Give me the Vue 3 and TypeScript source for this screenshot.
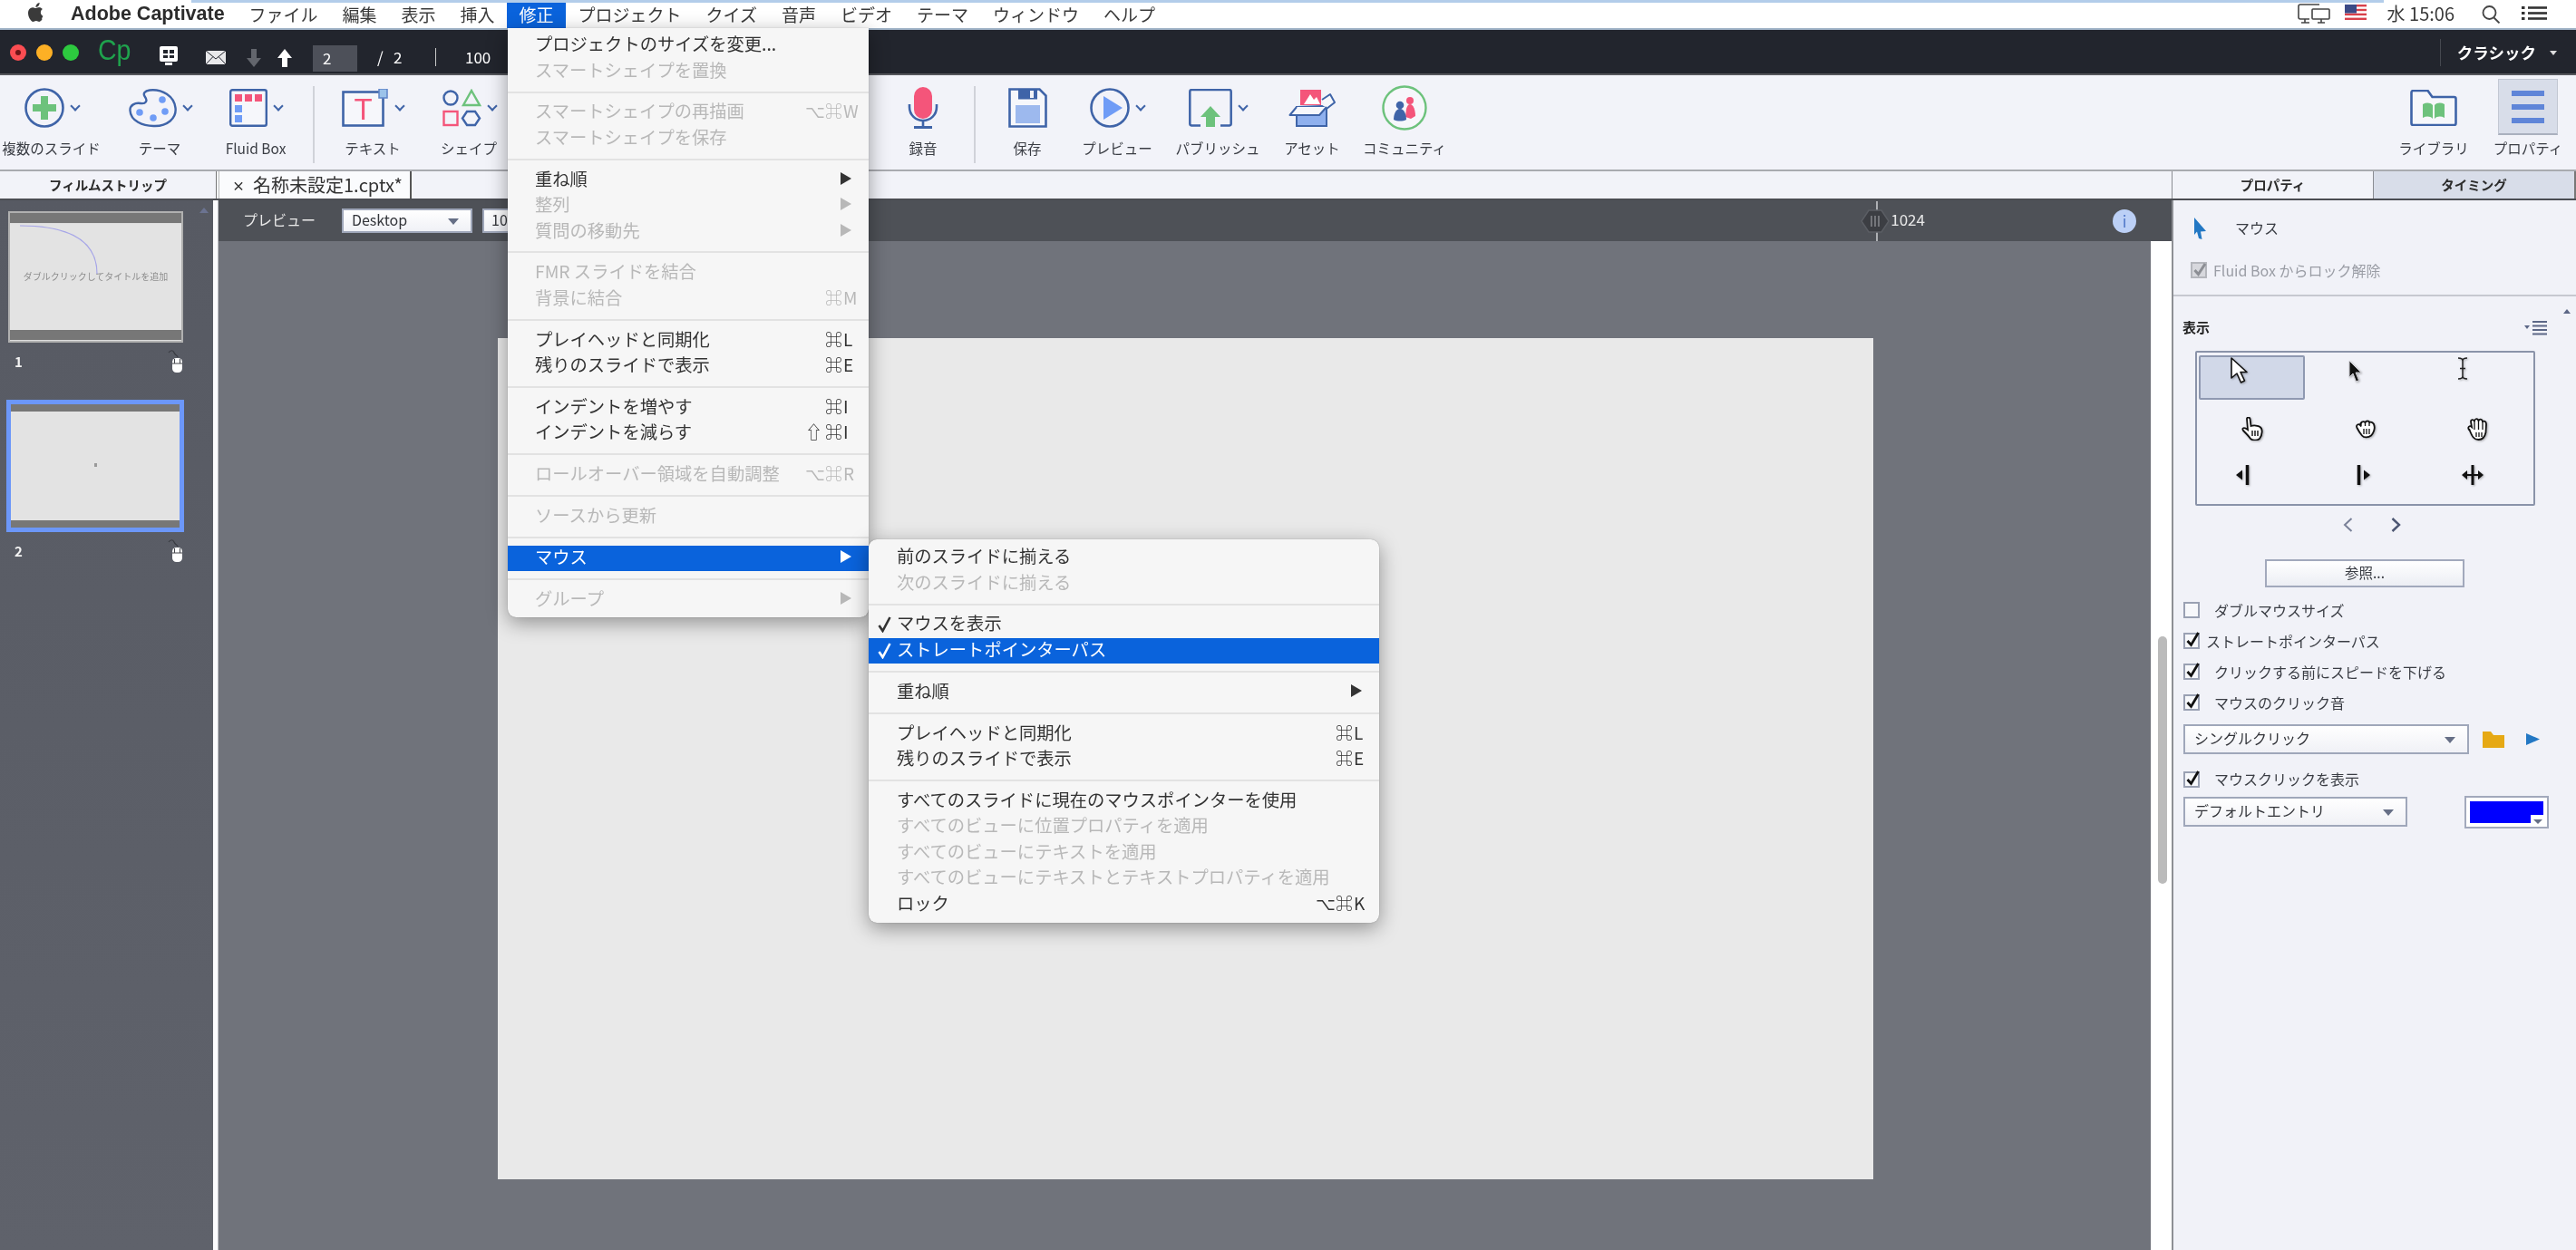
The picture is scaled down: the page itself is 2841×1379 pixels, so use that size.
<script setup lang="ts">
interface MenuItem {
  sep?: boolean
  l?: string
  d?: boolean
  k?: string[]
  arrow?: boolean
  active?: boolean
  check?: boolean
}

const menuNames = ['ファイル', '編集', '表示', '挿入', '修正', 'プロジェクト', 'クイズ', '音声', 'ビデオ', 'テーマ', 'ウィンドウ', 'ヘルプ']

const mainMenu: MenuItem[] = [
  { l: 'プロジェクトのサイズを変更...' },
  { l: 'スマートシェイプを置換', d: true },
  { sep: true },
  { l: 'スマートシェイプの再描画', d: true, k: ['⌥', '⌘', 'W'] },
  { l: 'スマートシェイプを保存', d: true },
  { sep: true },
  { l: '重ね順', arrow: true },
  { l: '整列', d: true, arrow: true },
  { l: '質問の移動先', d: true, arrow: true },
  { sep: true },
  { l: 'FMR スライドを結合', d: true },
  { l: '背景に結合', d: true, k: ['', '⌘', 'M'] },
  { sep: true },
  { l: 'プレイヘッドと同期化', k: ['', '⌘', 'L'] },
  { l: '残りのスライドで表示', k: ['', '⌘', 'E'] },
  { sep: true },
  { l: 'インデントを増やす', k: ['', '⌘', 'I'] },
  { l: 'インデントを減らす', k: ['⇧', '⌘', 'I'] },
  { sep: true },
  { l: 'ロールオーバー領域を自動調整', d: true, k: ['⌥', '⌘', 'R'] },
  { sep: true },
  { l: 'ソースから更新', d: true },
  { sep: true },
  { l: 'マウス', active: true, arrow: true },
  { sep: true },
  { l: 'グループ', d: true, arrow: true },
]

const subMenu: MenuItem[] = [
  { l: '前のスライドに揃える' },
  { l: '次のスライドに揃える', d: true },
  { sep: true },
  { l: 'マウスを表示', check: true },
  { l: 'ストレートポインターパス', check: true, active: true },
  { sep: true },
  { l: '重ね順', arrow: true },
  { sep: true },
  { l: 'プレイヘッドと同期化', k: ['', '⌘', 'L'] },
  { l: '残りのスライドで表示', k: ['', '⌘', 'E'] },
  { sep: true },
  { l: 'すべてのスライドに現在のマウスポインターを使用' },
  { l: 'すべてのビューに位置プロパティを適用', d: true },
  { l: 'すべてのビューにテキストを適用', d: true },
  { l: 'すべてのビューにテキストとテキストプロパティを適用', d: true },
  { l: 'ロック', k: ['⌥', '⌘', 'K'] },
]

const menus = [
  { cls: 'menu-main', items: mainMenu },
  { cls: 'menu-sub', items: subMenu },
]

const checks = [
  { label: 'ダブルマウスサイズ', on: false, tight: false },
  { label: 'ストレートポインターパス', on: true, tight: true },
  { label: 'クリックする前にスピードを下げる', on: true, tight: false },
  { label: 'マウスのクリック音', on: true, tight: false },
]
</script>

<template>
  <div class="app">
    <!-- macOS menu bar -->
    <header class="menubar">
      <svg class="apple" viewBox="0 0 24 24"><path fill="#3a3a3a" d="M18.71 19.5c-.83 1.24-1.71 2.45-3.05 2.47-1.34.03-1.77-.79-3.29-.79-1.53 0-2 .77-3.27.82-1.31.05-2.3-1.32-3.14-2.53C4.25 17 2.94 12.45 4.7 9.39c.87-1.52 2.43-2.48 4.12-2.51 1.28-.02 2.5.87 3.29.87.78 0 2.26-1.07 3.68-.91.6.03 2.27.24 3.34 1.81-.09.06-2 1.17-1.98 3.5.03 2.78 2.44 3.71 2.47 3.71-.02.07-.38 1.32-1.27 2.64M13 3.5c.73-.83 1.94-1.46 2.94-1.5.13 1.17-.34 2.35-1.04 3.19-.69.85-1.83 1.51-2.95 1.42-.15-1.15.41-2.35 1.05-3.11z"/></svg>
      <span class="appname">Adobe Captivate</span>
      <span v-for="m in menuNames" :key="m" class="mitem" :class="{ on: m === '修正' }">{{ m }}</span>
      <div class="status">
        <svg class="st-screens" viewBox="0 0 36 22" fill="none" stroke="#444" stroke-width="1.600">
          <path d="M24 1H3a2 2 0 0 0-2 2v12a2 2 0 0 0 2 2h10"/><path d="M8 17v4M4 21h9"/>
          <rect x="16" y="6" width="19" height="11" rx="1" fill="#fff"/><path d="M26 17v4M22 21h8"/>
        </svg>
        <svg class="st-flag" viewBox="0 0 24 17">
          <rect width="24" height="17" fill="#fff"/>
          <rect y="0" width="24" height="2.400" fill="#d8404a"/><rect y="4.800" width="24" height="2.400" fill="#d8404a"/><rect y="9.700" width="24" height="2.400" fill="#d8404a"/><rect y="14.600" width="24" height="2.400" fill="#d8404a"/>
          <rect width="13" height="9.500" fill="#3b4a86"/>
        </svg>
        <span class="st-clock">水 15:06</span>
        <svg class="st-search" viewBox="0 0 21 20" fill="none" stroke="#444" stroke-width="1.800"><circle cx="8.500" cy="8" r="7"/><path d="M13.500 13.500l6 6"/></svg>
        <svg class="st-list" viewBox="0 0 28 15" fill="#333"><rect width="3.500" height="3" y="0"/><rect width="3.500" height="3" y="6"/><rect width="3.500" height="3" y="12"/><rect x="7" y=".2" width="21" height="2.600"/><rect x="7" y="6.200" width="21" height="2.600"/><rect x="7" y="12.200" width="21" height="2.600"/></svg>
      </div>
    </header>

    <!-- Application title bar -->
    <div class="titlebar">
      <i class="light red"></i><i class="light yellow"></i><i class="light green"></i>
      <span class="cp">Cp</span>
      <svg class="tb-slide" viewBox="0 0 22 24"><rect x="1" y="1" width="20" height="17" rx="2" fill="#fff"/><rect x="5" y="5" width="5" height="4" fill="#22252d"/><rect x="12" y="5" width="5" height="4" fill="#22252d"/><rect x="5" y="11" width="5" height="3" fill="#22252d"/><rect x="12" y="11" width="5" height="3" fill="#22252d"/><rect x="7" y="19" width="8" height="3" fill="#fff"/></svg>
      <svg class="tb-mail" viewBox="0 0 24 17" fill="#e8e8ea" stroke="#22252d" stroke-width="1"><rect x=".5" y=".5" width="23" height="16"/><path d="M.5.5L12 10 23.5.5M.5 16.5L9 7.500M23.500 16.500L15 7.500" fill="none"/></svg>
      <svg class="tb-arrow tb-down" viewBox="0 0 16 20"><path fill="#63666d" d="M5 0h6v10h5l-8 10-8-10h5z"/></svg>
      <svg class="tb-arrow tb-up" viewBox="0 0 16 20"><path fill="#fff" d="M8 0l8 10h-5v10H5V10H0z"/></svg>
      <span class="tb-input">2</span>
      <span class="tb-total">/&nbsp;&nbsp;&nbsp;2</span>
      <i class="tb-sep"></i>
      <span class="tb-zoom">100</span>
      <div class="workspace">
        <i class="ws-sep"></i>
        <span class="ws-name">クラシック</span>
        <i class="ws-caret"></i>
      </div>
    </div>

    <!-- Ribbon -->
    <div class="toolbar">
      <div class="tool w-slides">
        <div class="ticon">
          <svg width="44" height="44" viewBox="0 0 44 44"><circle cx="22" cy="22" r="20.500" fill="#f2f3f9" stroke="#3f64a8" stroke-width="2.600"/><path fill="#6dc27c" d="M18 9h8v9h9v8h-9v9h-8v-9H9v-8h9z"/></svg>
          <i class="chev"></i>
        </div>
        <span class="tlabel">複数のスライド</span>
      </div>
      <div class="tool w-theme">
        <div class="ticon">
          <svg width="53" height="44" viewBox="0 0 53 44"><path fill="none" stroke="#3f64a8" stroke-width="2.400" d="M23 2.500C37 1 50 9 51.500 22 53 34 42 42 29 42 15 42.500 2 36 1.500 25 1 19 7 16 13 17c6 1 8-3 5-7-3-4 0-7 5-7.500z"/><circle cx="12" cy="27" r="3.800" fill="#6f9cf6"/><circle cx="27" cy="33" r="3.800" fill="#6f9cf6"/><circle cx="40" cy="26" r="3.800" fill="#6f9cf6"/><circle cx="37" cy="13" r="3.800" fill="#6f9cf6"/></svg>
          <i class="chev"></i>
        </div>
        <span class="tlabel">テーマ</span>
      </div>
      <div class="tool w-fluid">
        <div class="ticon">
          <svg width="42" height="42" viewBox="0 0 42 42"><rect x="1.200" y="1.200" width="39.600" height="39.600" rx="2" fill="#f6f7fb" stroke="#3f64a8" stroke-width="2.400"/><rect x="6" y="6" width="8" height="8" fill="#f4557a"/><rect x="17" y="6" width="8" height="8" fill="#f4557a"/><rect x="28" y="6" width="8" height="8" fill="#f4557a"/><rect x="6" y="18" width="8" height="8" fill="#6f9cf6"/><rect x="6" y="29" width="8" height="8" fill="#6f9cf6"/></svg>
          <i class="chev"></i>
        </div>
        <span class="tlabel">Fluid Box</span>
      </div>
      <i class="tsep tsep-a"></i>
      <div class="tool w-text">
        <div class="ticon">
          <svg width="52" height="42" viewBox="0 0 52 42"><rect x="1.500" y="3.500" width="44" height="37" fill="#f6f7fb" stroke="#3f64a8" stroke-width="2.600"/><rect x="41" y="0" width="9" height="10" fill="#9cc3ea" stroke="#5f85c8" stroke-width="1.500"/><text x="23.500" y="34" text-anchor="middle" font-family="Liberation Sans, sans-serif" font-size="33" fill="#f4557a">T</text></svg>
          <i class="chev"></i>
        </div>
        <span class="tlabel">テキスト</span>
      </div>
      <div class="tool w-shape">
        <div class="ticon">
          <svg width="43" height="42" viewBox="0 0 43 42" fill="none" stroke-width="2.400"><circle cx="9" cy="10" r="7.500" stroke="#3f64a8"/><path d="M32 2l9 16H23z" stroke="#6dc27c"/><rect x="1.500" y="25" width="15" height="15" stroke="#f4557a"/><path d="M27 25h9l5 7.500-5 7.500h-9l-5-7.500z" stroke="#3f64a8"/></svg>
          <i class="chev"></i>
        </div>
        <span class="tlabel">シェイプ</span>
      </div>
      <div class="tool w-mic">
        <div class="ticon">
          <svg width="34" height="48" viewBox="0 0 34 48"><rect x="7" y="1" width="20" height="35" rx="10" fill="#f4557a"/><path d="M2 20v3c0 9 7 15 15 15s15-6 15-15v-3" fill="none" stroke="#3f64a8" stroke-width="2.600"/><path d="M17 38v7" stroke="#3f64a8" stroke-width="2.600"/><rect x="7" y="44" width="20" height="3" fill="#3f64a8"/></svg>
        </div>
        <span class="tlabel">録音</span>
      </div>
      <i class="tsep tsep-b"></i>
      <div class="tool w-save">
        <div class="ticon">
          <svg width="43" height="44" viewBox="0 0 43 44"><path d="M1.500 1.500h33l7 7v34h-40z" fill="#f6f7fb" stroke="#3f64a8" stroke-width="2.600"/><rect x="11" y="1.500" width="21" height="11" fill="#3f64a8"/><rect x="24" y="3" width="4" height="8" fill="#f2f3f9"/><rect x="8" y="19" width="27" height="20" fill="#9db9ee"/></svg>
        </div>
        <span class="tlabel">保存</span>
      </div>
      <div class="tool w-preview">
        <div class="ticon">
          <svg width="44" height="44" viewBox="0 0 44 44"><circle cx="22" cy="22" r="20.500" fill="#f2f3f9" stroke="#3f64a8" stroke-width="2.600"/><path fill="#6f9cf6" d="M15 9l21 13-21 13z"/></svg>
          <i class="chev"></i>
        </div>
        <span class="tlabel">プレビュー</span>
      </div>
      <div class="tool w-publish">
        <div class="ticon">
          <svg width="48" height="42" viewBox="0 0 48 42"><path d="M13 40.500H3a2 2 0 0 1-1.700-2V3a2 2 0 0 1 1.700-2h42a2 2 0 0 1 1.700 2v35.500a2 2 0 0 1-1.700 2H35" fill="none" stroke="#3f64a8" stroke-width="2.500"/><path fill="#6dc27c" d="M24 19l11 12h-6v11H19V31h-6z"/></svg>
          <i class="chev"></i>
        </div>
        <span class="tlabel">パブリッシュ</span>
      </div>
      <div class="tool w-asset">
        <div class="ticon">
          <svg width="53" height="42" viewBox="0 0 53 42"><path fill="#f4557a" d="M13 1h23v17H13z"/><path fill="#fff" d="M17 17l7-11 4 6 3-3 4 8z"/><path d="M9 20l28-1 5 3v19H9z" fill="#8fb0ee" stroke="#3f64a8" stroke-width="2"/><path d="M9 20L1.500 29H34l8-9M42 22l9-7-5-9-9 6" fill="#f6f7fb" stroke="#3f64a8" stroke-width="2" stroke-linejoin="round"/></svg>
        </div>
        <span class="tlabel">アセット</span>
      </div>
      <div class="tool w-comm">
        <div class="ticon">
          <svg width="50" height="50" viewBox="0 0 50 50"><circle cx="25" cy="25" r="23.500" fill="#f6f7fb" stroke="#6dc27c" stroke-width="2.400"/><circle cx="31" cy="17" r="4" fill="#f4557a"/><path fill="#f4557a" d="M31 21c4 0 6 7 6 13l-5 3-6-2 1-9c1-3 2-5 4-5z"/><circle cx="20" cy="22" r="4.300" fill="#3f64a8"/><path fill="#3f64a8" d="M20 26c5 0 7 7 7 12-4 2-10 2-14 0 0-5 2-12 7-12z"/></svg>
        </div>
        <span class="tlabel">コミュニティ</span>
      </div>
      <div class="tool w-lib">
        <div class="ticon">
          <svg width="52" height="40" viewBox="0 0 52 40"><path d="M1.500 3a2 2 0 0 1 2-2h16l5 7h24a2 2 0 0 1 2 2v27a2 2 0 0 1-2 2H3.500a2 2 0 0 1-2-2z" fill="#f6f7fb" stroke="#3f64a8" stroke-width="2.600"/><path fill="#6dc27c" d="M14 16c4-2 8-2 11 1v15c-3-3-7-3-11-1zM38 16c-4-2-8-2-11 1v15c3-3 7-3 11-1z"/></svg>
        </div>
        <span class="tlabel">ライブラリ</span>
      </div>
      <div class="tool w-prop">
        <div class="prop-hi">
          <i></i><i></i><i></i>
        </div>
        <span class="tlabel">プロパティ</span>
      </div>
    </div>

    <!-- Tabs -->
    <div class="tabrow">
      <div class="tab-film">フィルムストリップ</div>
      <div class="tab-doc"><span class="x">×</span><span>名称未設定1.cptx*</span></div>
      <div class="tab-fill"></div>
      <div class="tab-prop">プロパティ</div>
      <div class="tab-time">タイミング</div>
    </div>

    <div class="main">
      <!-- Filmstrip -->
      <aside class="film">
        <i class="film-up"></i>
        <div class="thumb t1">
          <div class="band"></div>
          <div class="tbody">ダブルクリックしてタイトルを追加</div>
          <div class="band"></div>
          <svg class="curve" viewBox="0 0 193 145" fill="none"><path d="M11 14C55 14 96 25 96 67" stroke="#a7a6e8" stroke-width="1.200"/></svg>
        </div>
        <div class="tinfo">
          <span>1</span>
          <svg width="18" height="26" viewBox="0 0 18 26"><path d="M1 3c2-3 5-3 6 0s4 3 4 5" fill="none" stroke="#3a3c42" stroke-width="1.200"/><rect x="5" y="9" width="11" height="16" rx="4.500" fill="#fff"/><path d="M7.500 10v5M13.500 10v5M5 15h11" stroke="#44464c" stroke-width="1"/></svg>
        </div>
        <div class="thumb t2">
          <div class="band"></div>
          <div class="tbody"><i class="dot"></i></div>
          <div class="band"></div>
        </div>
        <div class="tinfo">
          <span>2</span>
          <svg width="18" height="26" viewBox="0 0 18 26"><path d="M1 3c2-3 5-3 6 0s4 3 4 5" fill="none" stroke="#3a3c42" stroke-width="1.200"/><rect x="5" y="9" width="11" height="16" rx="4.500" fill="#fff"/><path d="M7.500 10v5M13.500 10v5M5 15h11" stroke="#44464c" stroke-width="1"/></svg>
        </div>
      </aside>
      <div class="film-gap"></div>

      <!-- Stage -->
      <section class="stage">
        <div class="pbar">
          <span class="pbar-label">プレビュー</span>
          <div class="sel sel-device">Desktop<i class="caret"></i></div>
          <div class="sel sel-zoom">100</div>
          <div class="marker">
            <svg width="32" height="44" viewBox="0 0 32 44"><path d="M18 0v44" stroke="#cfd0d3" stroke-width="1.500"/><path d="M9 10h14l8 12-8 12H9L1 22z" fill="#3c3e43" stroke="#5b5e64" stroke-width="1.500"/><path d="M12 16v12M16 16v12M20 16v12" stroke="#9a9ca1" stroke-width="1.200"/></svg>
            <span>1024</span>
          </div>
          <span class="info">i</span>
        </div>
        <div class="stage-body">
          <div class="canvas"><div class="slide"></div></div>
          <div class="vscroll"><i></i></div>
        </div>
      </section>

      <!-- Property panel -->
      <aside class="panel">
        <div class="p-head">
          <svg width="15" height="24" viewBox="0 0 15 24"><path fill="#2378c4" d="M1 0l13 15-6 .5L9.500 24 6 23 4 15.500 1 19z"/></svg>
          <span>マウス</span>
        </div>
        <div class="p-fluid">
          <span class="cb dis"><svg viewBox="0 0 18 18"><path d="M3.500 9l4 4.500L15 2" fill="none" stroke="#8c8e94" stroke-width="3"/></svg></span>
          <span>Fluid Box からロック解除</span>
        </div>
        <div class="p-rule"></div>
        <div class="p-section">
          <b>表示</b>
          <svg class="p-menu" width="25" height="17" viewBox="0 0 25 17"><path fill="#5c6786" d="M0 6h6l-3 4zM9 1h16v2H9zM9 5.500h16v2H9zM9 10h16v2H9zM9 14.500h16v2H9z"/></svg>
          <i class="p-up"></i>
        </div>

        <div class="cursors">
          <div class="cur sel-tile">
            <svg class="c-arrow" width="19" height="29" viewBox="0 0 19 29"><path d="M1 1v22l6-5 4.500 10 4-2-4.500-9.500h7z" fill="#fff" stroke="#111" stroke-width="1.600" stroke-linejoin="round"/></svg>
          </div>
          <div class="cur">
            <svg class="c-black" width="15" height="26" viewBox="0 0 15 26"><path d="M1 1v18l4-4 3.500 9 3-1.500L8 14h6z" fill="#111" stroke="#cfcfd4" stroke-width="1"/></svg>
          </div>
          <div class="cur">
            <svg class="c-ibeam" width="12" height="25" viewBox="0 0 12 25" fill="none" stroke="#222" stroke-width="1.500"><path d="M1 1c3 0 5 1 5 3v17c0 2-2 3-5 3M11 1C8 1 6 2 6 4v17c0 2 2 3 5 3M3 12.500h6"/></svg>
          </div>
          <div class="cur">
            <svg class="c-hand" width="24" height="26" viewBox="0 0 24 26"><path d="M6 2c0-2 3-2 3.500 0l1 8c3-1 8-.5 10 1 3 2 3 8-.5 13-3 2-7 2-10 0-2-3-5-6-8-9-2-3 1-4 5-1z" fill="#fff" stroke="#111" stroke-width="1.800"/><path d="M12 15v6M15 15v6M18 15v6" stroke="#111" stroke-width="1.400"/></svg>
          </div>
          <div class="cur">
            <svg class="c-fist" width="22" height="21" viewBox="0 0 22 21"><path d="M1.500 9C0 6 3 4 5 6c0-3 3-5 5.500-3 1-2 4-2 5 0 2-1 5 1 5 4 1 3-1 8-3.500 10.500-3 2.500-8 2.500-10 0C5 15 3 12 1.500 9z" fill="#fff" stroke="#111" stroke-width="1.800"/><path d="M6 3.500v4M10.500 3v4M15 3v4M9 10v6M12 10v6M15 10v6" stroke="#111" stroke-width="1.300"/></svg>
          </div>
          <div class="cur">
            <svg class="c-open" width="24" height="25" viewBox="0 0 24 25"><path d="M2 13C0 10 3 8 5 10L4 4c0-2 3-3 4 0 0-3 3-4 4.500-1 1-2 4-2 4.500 1 2-1 4 0 4 3l-.5 9c-1 5-4 8-8 8-5 0-7-3-10-11z" fill="#fff" stroke="#111" stroke-width="1.800"/><path d="M8 4v9M12.500 3v10M17 4v9M10 16v5M13 16v5M16 16v5" stroke="#111" stroke-width="1.300"/></svg>
          </div>
          <div class="cur">
            <svg class="c-left" width="16" height="24" viewBox="0 0 16 24"><path d="M12.500 1v22" stroke="#111" stroke-width="3.500"/><path d="M11 12H7V6.500L0 12l7 5.500V12z" fill="#111"/></svg>
          </div>
          <div class="cur">
            <svg class="c-right" width="16" height="24" viewBox="0 0 16 24"><path d="M3.500 1v22" stroke="#111" stroke-width="3.500"/><path d="M5 12h4V6.500l7 5.500-7 5.500V12z" fill="#111"/></svg>
          </div>
          <div class="cur">
            <svg class="c-move" width="24" height="24" viewBox="0 0 24 24"><path d="M12 1v22" stroke="#111" stroke-width="3"/><path d="M0 12l6-5v4h12V7l6 5-6 5v-4H6v4z" fill="#111"/></svg>
          </div>
        </div>

        <div class="pager">
          <svg width="11" height="16" viewBox="0 0 11 16" fill="none" stroke="#7a8198" stroke-width="2"><path d="M9.500 1L2 8l7.500 7"/></svg>
          <svg width="11" height="16" viewBox="0 0 11 16" fill="none" stroke="#4c5672" stroke-width="2.400"><path d="M1.500 1L9 8l-7.500 7"/></svg>
        </div>
        <div class="browse">参照...</div>

        <div class="checks">
          <div v-for="c in checks" :key="c.label" class="chk" :class="{ tight: c.tight }">
            <span class="cb"><svg v-if="c.on" viewBox="0 0 18 18"><path d="M3.500 9l4 4.500L15.500 0" fill="none" stroke="#111" stroke-width="2.800"/></svg></span>
            <span>{{ c.label }}</span>
          </div>
        </div>
        <div class="p-sound">
          <div class="sel sel-sound">シングルクリック<i class="caret"></i></div>
          <svg width="24" height="18" viewBox="0 0 24 18"><path fill="#e6a914" d="M0 0h9l3 4h12v14H0z"/></svg>
          <svg class="p-play" width="15" height="13" viewBox="0 0 15 13"><path fill="#2378c4" d="M0 0l15 6.500L0 13z"/></svg>
        </div>
        <div class="chk chk-last">
          <span class="cb"><svg viewBox="0 0 18 18"><path d="M3.500 9l4 4.500L15.500 0" fill="none" stroke="#111" stroke-width="2.800"/></svg></span>
          <span>マウスクリックを表示</span>
        </div>
        <div class="p-entry">
          <div class="sel sel-entry">デフォルトエントリ<i class="caret"></i></div>
          <div class="swatch"><i class="swatch-fill"></i><i class="swatch-notch"><i class="caret"></i></i></div>
        </div>
      </aside>
    </div>

    <!-- Open menus -->
    <div v-for="m in menus" :key="m.cls" class="menu" :class="m.cls">
      <template v-for="(it, i) in m.items" :key="i">
        <div v-if="it.sep" class="msep"></div>
        <div v-else class="mrow" :class="{ dis: it.d, active: it.active }">
          <svg v-if="it.check" class="mcheck" width="15" height="18" viewBox="0 0 15 18"><path d="M1.500 10l4 6L13.500 1" fill="none" :stroke="it.active ? '#fff' : '#333'" stroke-width="2.600"/></svg>
          <span class="mlabel">{{ it.l }}</span>
          <span v-if="it.k" class="keys"><span>{{ it.k[0] }}</span><span>{{ it.k[1] }}</span><span>{{ it.k[2] }}</span></span>
          <i v-if="it.arrow" class="marrow"></i>
        </div>
      </template>
    </div>
  </div>
</template>

<style>
html, body { margin: 0; background: #70737b; }
</style>

<style scoped>
* { box-sizing: border-box; }
i { display: block; font-style: normal; }

.app {
  position: relative;
  width: 2841px;
  height: 1379px;
  overflow: hidden;
  display: flex;
  flex-direction: column;
  font-family: "Noto Sans CJK JP", "Liberation Sans", "DejaVu Sans", sans-serif;
  color: #333;
  background: #70737b;
  filter: blur(.55px);
}

/* menu bar */
.menubar {
  position: relative;
  flex: 0 0 33px;
  min-height: 0;
  display: flex;
  align-items: flex-end;
  padding-left: 27px;
  background: #fff;
  border-bottom: 2px solid #9fb2c6;
  font-size: 19px;
}
.menubar::before {
  content: "";
  position: absolute;
  left: 211px;
  top: 0;
  width: 2418px;
  height: 3px;
  background: #b3cdea;
}
.apple { width: 25px; height: 25px; margin-bottom: 5px; }
.appname {
  width: 183px;
  height: 28px;
  margin-left: 26px;
  font-family: "Liberation Sans", sans-serif;
  font-weight: 700;
  font-size: 21.500px;
  line-height: 24px;
  color: #2c2c2c;
}
.mitem { padding: 0 13.500px; height: 28px; line-height: 25px; color: #3a3a3a; }
.mitem.on { background: #0a63dc; color: #fff; }
.status { margin-left: auto; height: 31px; display: flex; align-items: center; padding-right: 32px; }
.st-screens { width: 36px; height: 22px; margin-top: -1px; }
.st-flag { width: 24px; height: 17px; margin: -4px 0 0 16px; }
.st-clock { margin: -2px 0 0 23px; font-size: 20px; line-height: 26px; color: #3a3a3a; white-space: nowrap; }
.st-search { width: 21px; height: 20px; margin: 0 0 0 30px; }
.st-list { width: 28px; height: 15px; margin: -2px 0 0 23px; }

/* title bar */
.titlebar {
  flex: 0 0 50px;
  min-height: 0;
  display: flex;
  align-items: center;
  padding-left: 11px;
  background: #22252d;
  color: #fff;
  border-bottom: 2px solid #55575c;
}
.light { width: 18px; height: 18px; border-radius: 50%; margin: 2px 11px 0 0; }
.red { background: #fb4d52; position: relative; }
.red::after { content: ""; position: absolute; inset: 6px; border-radius: 50%; background: #6e1517; }
.yellow { background: #fdb025; }
.green { background: #2dc93f; }
.cp {
  margin: -3px 0 0 10px;
  width: 38px;
  font-family: "Liberation Sans", sans-serif;
  font-size: 31px;
  line-height: 34px;
  color: #1fa34d;
  transform: scaleX(.92);
  transform-origin: left;
}
.tb-slide { width: 22px; height: 24px; margin: 10px 0 0 29px; }
.tb-mail { width: 24px; height: 17px; margin: 12px 0 0 29px; }
.tb-arrow { width: 16px; height: 20px; margin-top: 14px; }
.tb-down { margin-left: 22px; }
.tb-up { margin-left: 18px; }
.tb-input {
  width: 49px;
  height: 29px;
  margin: 14px 0 0 23px;
  padding-left: 11px;
  background: #4d5059;
  font-size: 17px;
  line-height: 28px;
}
.tb-total { margin: 12px 0 0 22px; font-size: 17px; line-height: 24px; white-space: nowrap; width: 36px; }
.tb-sep { width: 1px; height: 20px; margin: 12px 0 0 28px; background: #c9c9c9; }
.tb-zoom { margin: 12px 0 0 32px; font-size: 17px; line-height: 24px; }
.workspace { margin-left: auto; display: flex; align-items: center; padding: 2px 21px 0 0; }
.ws-sep { width: 1px; height: 30px; background: #45484f; }
.ws-name { margin-left: 18px; font-size: 17.500px; font-weight: 700; line-height: 24px; }
.ws-caret { margin-left: 15px; border: 4px solid transparent; border-top: 5px solid #ddd; border-bottom: 0; }

/* ribbon */
.toolbar {
  flex: 0 0 104px;
  min-height: 0;
  display: flex;
  padding-top: 10px;
  background: #f2f3f9;
}
.tool { flex: none; display: flex; flex-direction: column; align-items: center; }
.ticon { height: 52px; display: flex; align-items: center; justify-content: center; gap: 8px; }
.tlabel { margin-top: 8px; font-size: 15.500px; line-height: 20px; white-space: nowrap; color: #3a3d44; }
.chev {
  width: 8px;
  height: 8px;
  margin-top: -5px;
  border-right: 2.500px solid #3f64a8;
  border-bottom: 2.500px solid #3f64a8;
  transform: rotate(45deg);
}
.w-slides { width: 113px; }
.w-theme { width: 126px; }
.w-fluid { width: 86px; }
.tsep { flex: none; width: 2px; height: 85px; margin-top: 2px; background: #d0d2d9; }
.tsep-a { margin: 2px 20px 0; }
.w-text { width: 88px; }
.w-shape { width: 124px; }
.w-mic { width: 70px; margin-left: 404px; }
.tsep-b { margin: 2px 21px 0; }
.w-save { width: 72px; }
.w-preview { width: 126px; }
.w-publish { width: 96px; }
.w-asset { width: 112px; }
.w-comm { width: 92px; }
.w-lib { width: 78px; margin-left: auto; }
.w-prop { width: 80px; margin: -6px 13px 0 25px; }
.prop-hi {
  width: 66px;
  height: 62px;
  display: flex;
  flex-direction: column;
  align-items: center;
  justify-content: center;
  gap: 9px;
  background: #d8dde9;
  border: 1px solid #c2c7d3;
  border-bottom: 2px solid #aab0be;
}
.prop-hi i { width: 36px; height: 6px; background: #5f85d8; }
.w-prop .tlabel { margin-top: 4px; }

/* tabs */
.tabrow {
  flex: 0 0 34px;
  min-height: 0;
  display: flex;
  background: #f2f3f9;
  border-top: 2px solid #a9abb0;
  border-bottom: 2px solid #4b4d53;
  line-height: 30px;
}
.tab-film {
  width: 239px;
  text-align: center;
  font-size: 14.500px;
  font-weight: 700;
  color: #2c2c2c;
  border-right: 1px solid #777;
}
.tab-doc {
  width: 213px;
  margin-left: 2px;
  display: flex;
  gap: 9px;
  padding-left: 14px;
  background: #fafbfd;
  border-left: 1px solid #bbb;
  border-right: 2px solid #555;
  font-size: 20px;
  color: #333;
  white-space: nowrap;
}
.tab-doc .x { font-size: 14px; font-weight: 700; }
.tab-fill { flex: 1; }
.tab-prop, .tab-time {
  width: 223px;
  text-align: center;
  font-size: 14.500px;
  font-weight: 700;
  color: #2c2c2c;
  border-left: 1px solid #8a8c92;
}
.tab-prop { width: 222px; }
.tab-time { background: #d8dde9; width: 224px; border-right: 2px solid #777; }

.main { flex: 1; min-height: 0; display: flex; }

/* film strip */
.film {
  position: relative;
  flex: 0 0 234px;
  padding: 12px 32px 0 9px;
  background: linear-gradient(#575a63, #5f626b);
}
.film-up {
  position: absolute;
  top: 8px;
  right: 5px;
  border: 5px solid transparent;
  border-bottom: 6px solid #6b7391;
  border-top: 0;
}
.film-gap { flex: 0 0 6px; background: #fbfbfd; border-right: 1px solid #bdbfc5; }
.thumb { position: relative; display: flex; flex-direction: column; background: #e3e3e3; }
.t1 { width: 193px; height: 145px; border: 2px solid #b0b0b0; }
.t1 .band { flex: 0 0 12px; background: #777; border-bottom: 1px solid #ddd; }
.t1 .band:last-child { flex-basis: 11px; border-top: 1px solid #ccc; border-bottom: 0; }
.tbody {
  flex: 1;
  display: flex;
  align-items: center;
  justify-content: center;
  padding-bottom: 3px;
  font-size: 10px;
  color: #8e8e8e;
  white-space: nowrap;
}
.curve { position: absolute; inset: 0; width: 193px; height: 145px; }
.t2 { width: 196px; height: 146px; margin-left: -2px; border: 5px solid #6c97f9; }
.t2 .band { flex: 0 0 8px; background: #777; }
.dot { width: 3px; height: 4px; background: #9a9a9a; }
.tinfo {
  display: flex;
  align-items: center;
  justify-content: space-between;
  height: 44px;
  width: 193px;
  padding-left: 7px;
  font-size: 15px;
  font-weight: 700;
  color: #f2f2f2;
  margin-bottom: 19px;
}
.tinfo span { margin-top: -3px; }
.tinfo svg { margin-right: -1px; margin-top: -2px; }

/* stage */
.stage { flex: 1; min-width: 0; display: flex; flex-direction: column; }
.pbar {
  flex: 0 0 45px;
  min-height: 0;
  display: flex;
  align-items: center;
  padding-left: 27px;
  background: #4e5157;
  color: #e8e8e8;
  font-size: 16px;
}
.pbar-label { width: 109px; line-height: 22px; margin-top: -3px; }
.sel {
  position: relative;
  display: flex;
  align-items: center;
  padding-bottom: 3px;
  background: linear-gradient(#fff, #f0f1f6);
  border: 2px solid #9fa7ba;
  color: #33353a;
  font-size: 16px;
  line-height: 22px;
  white-space: nowrap;
}
.caret {
  position: absolute;
  right: 13px;
  top: 50%;
  margin-top: -3px;
  border: 6px solid transparent;
  border-top: 7px solid #666f86;
  border-bottom: 0;
}
.sel-device { width: 144px; height: 27px; padding-left: 9px; }
.sel-zoom { width: 70px; height: 27px; margin-left: 11px; padding-left: 8px; }
.marker { display: flex; align-items: center; margin-left: auto; }
.marker span { margin: -3px 0 0 1px; font-size: 17px; line-height: 22px; }
.info {
  width: 26px;
  height: 26px;
  margin: 0 39px 0 207px;
  border-radius: 50%;
  background: #bcd0f6;
  color: #5077c8;
  text-align: center;
  font-size: 17px;
  line-height: 25px;
}
.stage-body { flex: 1; min-height: 0; display: flex; }
.canvas { flex: 1; padding: 107px 0 0 308px; background: #70737b; }
.slide { width: 1517px; height: 928px; background: #e9e9e9; }
.vscroll { flex: 0 0 23px; padding: 436px 0 0 8px; background: #fff; }
.vscroll i { width: 10px; height: 273px; border-radius: 5px; background: #bbb; }

/* property panel */
.panel {
  flex: 0 0 446px;
  padding-top: 16px;
  background: #f1f2f8;
  border-left: 2px solid #8d8f94;
  font-size: 16px;
  color: #3a3d44;
}
.p-head { height: 30px; display: flex; align-items: center; padding-left: 22px; gap: 31px; font-size: 16px; }
.p-head span { margin-top: -3px; line-height: 22px; }
.p-fluid {
  height: 30px;
  margin-top: 16px;
  display: flex;
  align-items: center;
  gap: 7px;
  padding-left: 19px;
  color: #9a9da5;
}
.cb {
  flex: none;
  display: block;
  width: 18px;
  height: 18px;
  background: #f7f8fb;
  border: 2px solid #9aa1b3;
}
.cb svg { display: block; width: 18px; height: 18px; margin: -2px 0 0 -1px; overflow: visible; }
.cb.dis { background: #d7d8dd; border-color: #b4b6bc; }
.p-rule { height: 2px; margin-top: 12px; background: #c6c8d0; }
.p-section { position: relative; height: 24px; margin: 23px 0 0 10px; display: flex; align-items: center; }
.p-section b { font-size: 15px; line-height: 22px; margin-top: -3px; color: #222; }
.p-menu { position: absolute; left: 377px; top: 3px; }
.p-up {
  position: absolute;
  left: 420px;
  top: -9px;
  border: 4px solid transparent;
  border-bottom: 5px solid #5c6786;
  border-top: 0;
}
.cursors {
  width: 375px;
  height: 171px;
  margin: 13px 0 0 24px;
  padding: 3px 2px;
  display: grid;
  grid-template-columns: 117px 125px 125px;
  grid-template-rows: 49px 64px 38px;
  border: 2px solid #8a93a9;
  border-radius: 2px;
}
.cur { display: flex; align-items: center; }
.cur svg { filter: drop-shadow(1px 1.500px 1px rgba(0, 0, 0, .3)); }
.sel-tile { background: #d1d8e8; border: 2px solid #8f99b1; border-radius: 2px; align-items: flex-start; }
.c-arrow { margin-left: 33px; }
.cur:nth-child(2), .cur:nth-child(3) { align-items: flex-start; }
.c-black { margin: 5px 0 0 48px; }
.c-ibeam { margin: 2px 0 0 43px; }
.c-hand { margin-left: 47px; }
.c-fist { margin-left: 56px; }
.c-open { margin-left: 54px; }
.c-left { margin-left: 41px; }
.c-right { margin-left: 56px; }
.c-move { margin-left: 48px; }
.pager { height: 42px; display: flex; align-items: center; padding-left: 187px; gap: 42px; }
.browse {
  width: 220px;
  height: 31px;
  margin: 17px 0 0 101px;
  background: linear-gradient(#fff, #eceef4);
  border: 2px solid #a2a9bc;
  text-align: center;
  font-size: 15.500px;
  line-height: 25px;
}
.checks { margin-top: 9px; }
.chk { height: 34px; display: flex; align-items: center; gap: 16px; padding: 0 0 2px 11px; line-height: 24px; }
.chk > span:last-child { margin-top: -1px; }
.chk.tight { gap: 7px; }
.p-sound { display: flex; align-items: center; margin-top: 6px; padding-left: 11px; }
.sel-sound { width: 315px; height: 33px; padding-left: 10px; }
.p-sound svg { margin-left: 15px; }
.p-sound .p-play { margin-left: 24px; }
.chk-last { height: 33px; margin-top: 12px; }
.p-entry { display: flex; align-items: flex-start; margin-top: 1px; padding-left: 11px; }
.sel-entry { width: 247px; height: 33px; margin-top: 1px; padding-left: 10px; }
.swatch {
  position: relative;
  width: 93px;
  height: 36px;
  margin-left: 63px;
  padding: 4px 4px;
  background: #fff;
  border: 2px solid #a2a9bc;
}
.swatch-fill { width: 81px; height: 24px; background: #0000ff; }
.swatch-notch { position: absolute; right: 3px; bottom: 2px; width: 15px; height: 11px; background: #fff; }
.swatch-notch .caret { right: 2px; top: 5px; margin: 0; border-width: 5px; border-top-width: 5px; border-bottom: 0; }

/* menus */
.menu {
  position: absolute;
  background: #f6f6f6;
  border-radius: 0 0 9px 9px;
  box-shadow: 0 6px 22px rgba(0, 0, 0, .38), 0 0 1px rgba(0, 0, 0, .4);
  font-size: 19.300px;
  color: #333;
}
.menu-main { left: 560px; top: 31px; width: 398px; padding: 5px 0; z-index: 2; }
.menu-sub { left: 958px; top: 595px; width: 563px; padding: 6px 0; border-radius: 9px; z-index: 3; }
.msep { height: 17.500px; display: flex; align-items: center; }
.msep::after { content: ""; flex: 1; height: 2px; background: #e2e2e2; }
.mrow {
  position: relative;
  height: 28.400px;
  display: flex;
  align-items: center;
  padding: 0 8px 4px 30px;
  white-space: nowrap;
  line-height: 26px;
}
.menu-sub .mrow { padding: 0 8px 4px 31px; }
.mrow.dis { color: #b8b8b8; }
.mrow.active { background: #0a63dc; color: #fff; }
.mcheck { position: absolute; left: 10px; top: 5px; }
.keys {
  margin-left: auto;
  display: grid;
  grid-template-columns: 22px 20px 20px;
  font-size: 19px;
}
.keys span { display: block; }
.marrow {
  margin-left: auto;
  margin-right: 11px;
  border-left: 12px solid #333;
  border-top: 7px solid transparent;
  border-bottom: 7px solid transparent;
}
.dis .marrow { border-left-color: #b8b8b8; }
.active .marrow { border-left-color: #fff; }
</style>
